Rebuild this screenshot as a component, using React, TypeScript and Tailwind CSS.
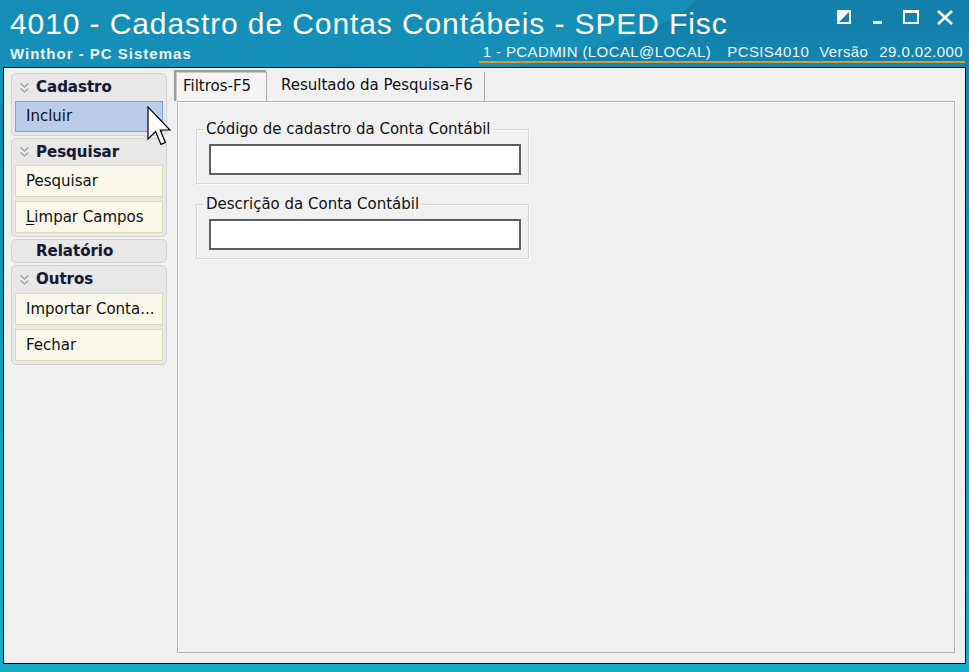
import React from "react";

function Chevron() {
  return (
    <svg width="11" height="12" viewBox="0 0 11 12" className="shrink-0">
      <path d="M1.5 1.5 L5.5 5 L9.5 1.5" fill="none" stroke="#a4a4a4" strokeWidth="1.6" />
      <path d="M1.5 6.5 L5.5 10 L9.5 6.5" fill="none" stroke="#a4a4a4" strokeWidth="1.6" />
    </svg>
  );
}

function GroupHeader({ title, chevron = true, h = "h-[25px]" }: { title: string; chevron?: boolean; h?: string }) {
  return (
    <div className={`${h} flex items-center pl-[7px]`}>
      {chevron ? <Chevron /> : <span className="w-[11px]" />}
      <span className="ml-[6px] text-[15px] font-bold text-[#171a36] [text-shadow:0_0_1px_rgba(120,110,80,0.35)]">{title}</span>
    </div>
  );
}

function Btn({ children, active = false, h = "h-[31px]" }: { children: React.ReactNode; active?: boolean; h?: string }) {
  return (
    <div
      className={`${h} mx-[3px] flex items-center pl-[10px] text-[15px] text-[#111] border whitespace-nowrap ${
        active ? "bg-[#b9cdea] border-[#7ea0cf]" : "bg-[#f9f7ea] border-[#dcd8bb]"
      }`}
    >
      {children}
    </div>
  );
}

function Field({ label }: { label: string }) {
  return (
    <fieldset className="w-[333px] border border-[#d6d6d6] shadow-[inset_1px_1px_0_#fbfbfb,1px_1px_0_#fbfbfb] p-0 pb-[8px]">
      <legend className="ml-[7px] px-[2px] text-[15px] leading-[18px] text-[#111] whitespace-nowrap">{label}</legend>
      <div className="ml-[12px] mt-[6px] h-[31px] w-[312px] bg-white border-2 border-[#5f5f5f]" />
    </fieldset>
  );
}

export default function App() {
  return (
    <div className="relative w-[969px] h-[672px] overflow-hidden bg-gradient-to-b from-[#137fab] via-[#1699bf] to-[#15adca] font-['DejaVu_Sans',Verdana,sans-serif]">
      {/* light sweep */}
      <div className="absolute left-[-200px] top-[-60px] w-[900px] h-[160px] rounded-[50%] bg-[#1aa3c8] opacity-40 rotate-[-4deg]" />

      {/* Header */}
      <div className="relative h-[67px] font-['Liberation_Sans',Arial,sans-serif] text-white">
        <div className="pl-[10px] pt-[7px] text-[30px] leading-[34px] tracking-[0.9px] whitespace-nowrap">
          4010 - Cadastro de Contas Contábeis - SPED Fisc
        </div>
        <div className="flex items-end justify-between pl-[10px] pr-[4px] mt-[2px]">
          <span className="text-[15px] leading-[18px] font-bold tracking-[1px] text-[#eef8fb]">Winthor - PC Sistemas</span>
          <div className="flex border-b-2 border-[#e8961e] pl-[4px] pr-[2px] text-[15px] leading-[18px] tracking-[0.4px] text-[#eef8fb] whitespace-nowrap">
            <span>1 - PCADMIN (LOCAL@LOCAL)</span>
            <span className="ml-[16px]">PCSIS4010</span>
            <span className="ml-[10px]">Versão</span>
            <span className="ml-[11px]">29.0.02.000</span>
          </div>
        </div>

        {/* window controls */}
        <div className="absolute top-[9px] left-[836px] flex items-start">
          <svg width="16" height="16" viewBox="0 0 16 16">
            <rect x="2" y="2" width="12" height="12" fill="none" stroke="white" strokeWidth="2" />
            <polygon points="2,2 14,2 2,14" fill="white" />
          </svg>
          <svg width="16" height="16" viewBox="0 0 16 16" className="ml-[20px]">
            <rect x="1" y="12" width="9" height="3" fill="white" />
          </svg>
          <svg width="18" height="16" viewBox="0 0 18 16" className="ml-[14px]">
            <rect x="2" y="2" width="14" height="12" fill="none" stroke="white" strokeWidth="2" />
            <rect x="1" y="1" width="16" height="3" fill="white" />
          </svg>
          <svg width="18" height="17" viewBox="0 0 18 17" className="ml-[16px]">
            <path d="M2 2 L16 15 M16 2 L2 15" stroke="white" strokeWidth="2.6" />
          </svg>
        </div>
      </div>

      {/* Window body */}
      <div className="relative mx-[3px] h-[597px] border border-black bg-[#f0f0f0] flex">
        {/* Left panel */}
        <div className="ml-[4px] mt-[5px] w-[159px] flex flex-col gap-[2px]">
          <div className="ml-[3px] rounded-[5px] border border-[#d3d3d3] bg-[#e8e8e8] pb-[3px]">
            <GroupHeader title="Cadastro" h="h-[27px]" />
            <Btn active h="h-[31px]">Incluir</Btn>
          </div>
          <div className="ml-[3px] rounded-[5px] border border-[#d3d3d3] bg-[#e8e8e8] pb-[3px] flex flex-col gap-[4px]">
            <div className="-mb-[4px]">
              <GroupHeader title="Pesquisar" h="h-[26px]" />
            </div>
            <Btn h="h-[32px]">Pesquisar</Btn>
            <Btn h="h-[32px]">
              <span>
                <span className="underline underline-offset-[2px]">L</span>impar Campos
              </span>
            </Btn>
          </div>
          <div className="ml-[3px] rounded-[5px] border border-[#d3d3d3] bg-[#e8e8e8]">
            <GroupHeader title="Relatório" chevron={false} h="h-[22px]" />
          </div>
          <div className="ml-[3px] rounded-[5px] border border-[#d3d3d3] bg-[#e8e8e8] pb-[3px] flex flex-col gap-[4px]">
            <div className="-mb-[4px]">
              <GroupHeader title="Outros" h="h-[27px]" />
            </div>
            <Btn h="h-[32px]">Importar Conta...</Btn>
            <Btn h="h-[32px]">Fechar</Btn>
          </div>
        </div>

        {/* Right content */}
        <div className="ml-[7px] mt-[2px] mr-[10px] mb-[10px] flex-1 flex flex-col">
          <div className="h-[31px] flex items-stretch text-[15px] text-[#111] whitespace-nowrap">
            <div className="w-[92px] border-t-2 border-l-2 border-[#9c9c9c] shadow-[inset_1px_1px_0_#c8c8c8] bg-[#f4f4f4] flex items-center pl-[7px]">
              Filtros-F5
            </div>
            <div className="mt-[2px] w-[1px] bg-[#a8a8a8]" />
            <div className="w-[217px] flex items-center pl-[14px]">Resultado da Pesquisa-F6</div>
            <div className="mt-[2px] w-[1px] bg-[#a8a8a8]" />
          </div>
          <div className="ml-[3px] flex-1 border border-[#b2b2b2] shadow-[inset_1px_1px_0_#ffffff] pl-[18px] pt-[18px] flex flex-col gap-[11px]">
            <Field label="Código de cadastro da Conta Contábil" />
            <Field label="Descrição da Conta Contábil" />
          </div>
        </div>
      </div>

      {/* mouse cursor */}
      <svg width="24" height="40" viewBox="0 0 12 20" className="absolute left-[147px] top-[106px]">
        <path d="M0.5 0.5 L0.5 16.5 L4.3 12.8 L7 19.2 L9.2 18.2 L6.6 12 L11.5 12 Z" fill="white" stroke="black" strokeWidth="0.6" strokeLinejoin="miter" />
      </svg>
    </div>
  );
}
